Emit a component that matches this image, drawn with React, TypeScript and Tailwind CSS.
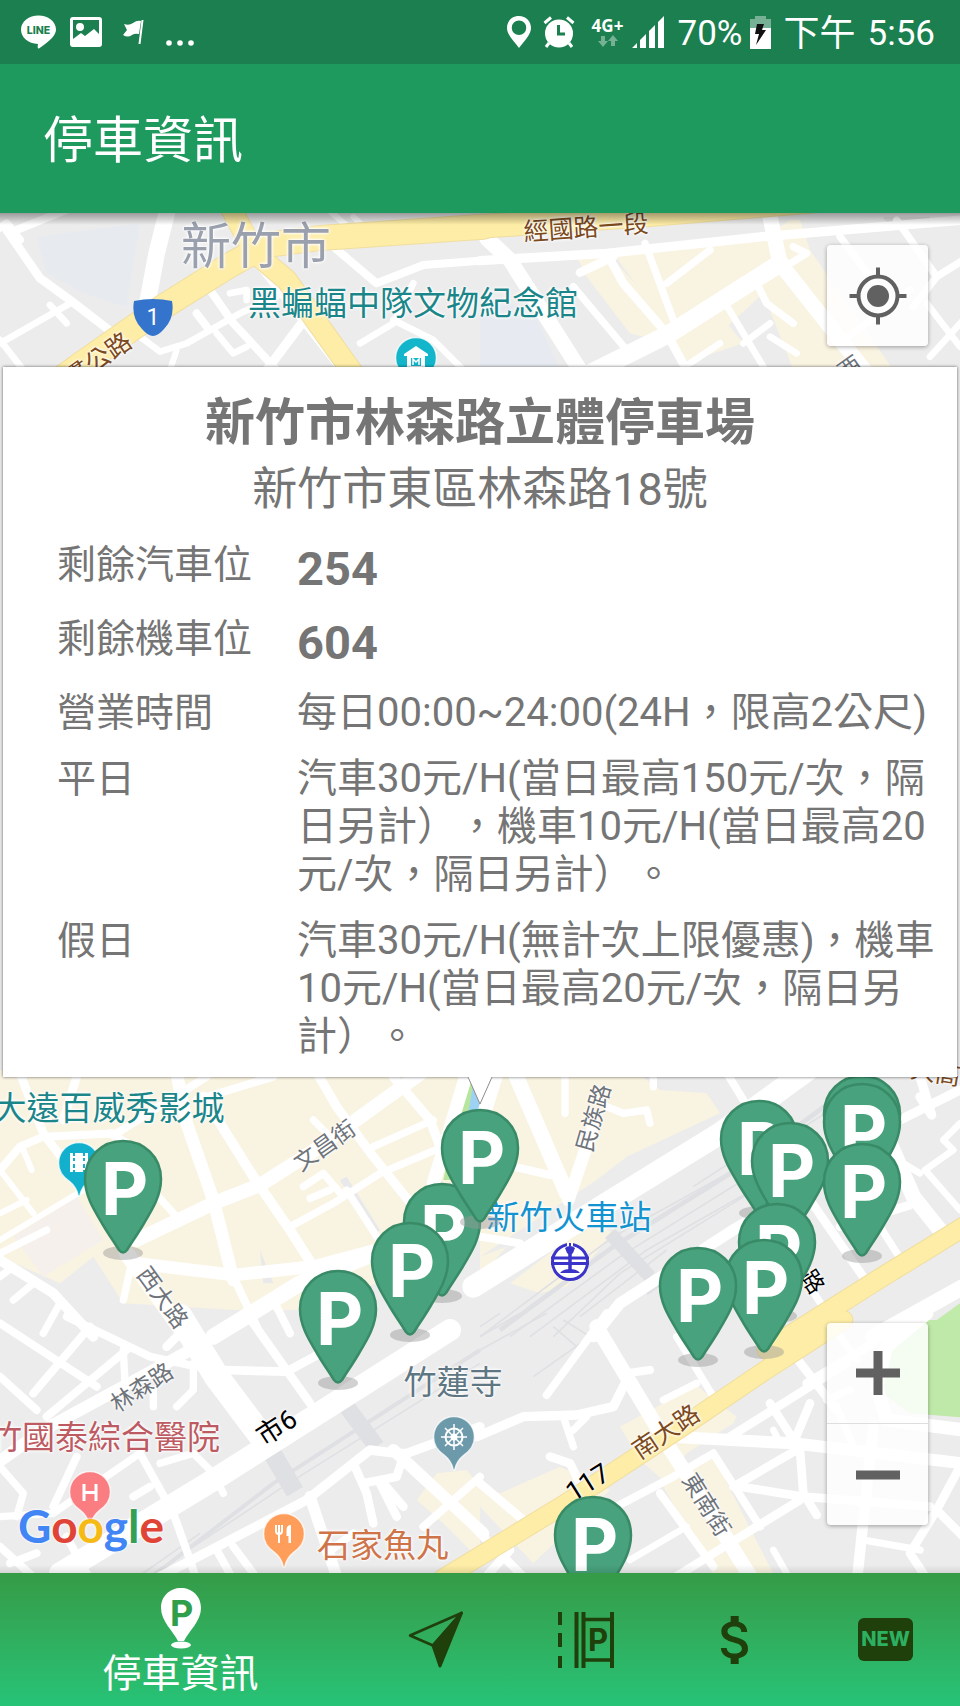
import React from "react";
import { MdAttachMoney } from "react-icons/md";

const MAP_W = 960;
const MAP_H = 1360;
const MAP_TOP = 213;

/* ---------- Map geometry: tiles are drawn at three units per pixel ---------- */

type Shape = [string | number, string];

interface Tile {
  x: number;
  y: number;
  areas: Shape[];
  rails: Shape[];
  roads: Shape[];
  majors: Shape[];
}

const BEIGE = "#f9f3e1";

const tiles: Tile[] = [
  {
    x: 0,
    y: 210,
    areas: [["#e7eaef", "M110 80 L420 40 L380 290 L250 250 L140 190Z"]],
    rails: [],
    roads: [
      [50, "M505 -10 L470 130 L440 290"],
      [26, "M20 60 L120 205 L210 270 L340 370"],
      [24, "M-10 60 L20 40 L60 90 M50 60 L210 -5"],
      [20, "M0 400 L210 280 M150 285 L200 340 M0 390 L70 480"],
      [24, "M1440 152 L1270 165 L1130 220 L1000 110"],
      [20, "M420 380 L480 425 L560 400 L720 310 L830 260"],
      [24, "M630 240 L700 340 L830 480 M590 310 L620 350"],
      [20, "M650 370 L700 430 L740 410 M690 250 L740 240 L740 270"],
      [28, "M905 340 L800 480"],
      [20, "M1080 400 L1180 340 L1240 220 M1180 330 L1300 390 L1390 480"],
      [18, "M510 480 L530 420 M1060 20 L1110 70 M980 -5 L1090 90"],
      [46, "M780 150 L1040 480"],
    ],
    majors: [
      [66, "M690 -10 L765 130 L860 210 L1060 490"],
      [78, "M130 545 L240 465 L490 290 L690 165 L800 105 L950 85 L1450 50"],
    ],
  },
  {
    x: 480,
    y: 210,
    areas: [
      [BEIGE, "M290 140 L850 85 L930 30 L960 30 L990 120 L1240 480 L940 480 L850 250 L610 470 L560 400 L450 370 L320 200Z"],
      ["#e7ebf1", "M0 260 L160 300 L240 480 L0 480Z"],
      ["#ececec", "M320 60 L500 60 L560 200 L780 400 L950 480 L700 480Z"],
      [BEIGE, "M400 130 L700 110 L860 150 L560 350Z M340 180 L530 370 L450 370Z M580 390 L700 290 L790 400 L640 450Z M870 200 L960 130 L1240 480 L1020 480Z"],
      ["#dddddd", "M1210 20 A70 30 0 0 0 1350 20Z"],
    ],
    rails: [],
    roads: [
      [28, "M0 152 L380 130 L850 80 L1450 30"],
      [46, "M20 85 L90 150 L300 480"],
      [26, "M300 188 L400 140 M380 130 L430 220 L560 370 L620 480"],
      [22, "M495 100 L580 330 M560 220 L690 120 M280 230 L440 420"],
      [54, "M330 490 L570 370 L900 160"],
      [46, "M870 20 L900 160 L1160 490"],
      [20, "M730 270 L850 470 M790 400 L870 340 M630 460 L720 400 M870 380 L950 430"],
      [22, "M830 220 L860 280 L940 340 M940 110 L980 130 L900 180"],
      [22, "M1080 80 L1200 240 M1250 30 L1370 200 L1450 150 M1370 200 L1300 290"],
      [20, "M1340 280 L1440 410 M1350 440 L1450 330 M1080 400 L1290 240"],
    ],
    majors: [[74, "M-10 50 L500 15 L1100 -35"]],
  },
  {
    x: 0,
    y: 1070,
    areas: [
      [BEIGE, "M0 0 L1440 0 L1440 500 L950 720 L700 720 L370 700 L280 560 L180 640 L0 560Z"],
      ["#f6f0ec", "M40 500 L230 380 L310 510 L130 620Z"],
      ["#e9e9ec", "M1040 320 L1140 480 L1120 500 L1020 330Z M780 540 L820 640 L790 640Z"],
      ["#b7e59d", "M1400 0 L1440 0 L1440 60 L1350 330 L1330 330Z"],
      ["#9ed2f2", "M1425 10 L1450 10 L1450 330 L1370 330Z"],
    ],
    rails: [],
    roads: [
      [42, "M410 510 L640 400 L780 345 L930 250 L1290 -10"],
      [38, "M530 10 L560 160 L640 390 L700 630"],
      [30, "M610 80 L760 320 L870 480 L940 590"],
      [28, "M940 -10 L1010 110 L1120 260 L1240 410"],
      [28, "M1180 20 L1290 150 L1320 230"],
      [38, "M410 580 L700 615 L940 590 L1130 540 L1260 520"],
      [48, "M1100 560 L900 640 L640 800"],
      [48, "M380 550 L560 800"],
      [22, "M870 470 L1000 400 L1140 310 L1330 230 M1120 230 L1300 150 M1040 360 L1130 500"],
      [22, "M910 350 L970 310 L1030 380 M930 385 L990 360 M940 150 L1000 210"],
      [24, "M0 300 L60 230 L130 200 L350 190 L620 20 M330 190 L400 230"],
      [26, "M60 10 L130 190 L250 350 M190 150 L230 20"],
      [18, "M0 300 L100 430 M70 240 L95 300 M0 430 L80 390 M0 510 L250 360"],
      [22, "M430 330 L530 440 M0 550 L140 480"],
      [30, "M0 570 L160 670 L280 800"],
      [22, "M100 640 L40 690 M370 690 L390 600 M130 790 L180 700 M0 620 L40 590"],
      [40, "M1300 340 L1400 10"],
      [24, "M700 620 L780 790 M820 690 L870 790 M820 20 L590 90"],
    ],
    majors: [],
  },
  {
    x: 480,
    y: 1070,
    areas: [
      [BEIGE, "M0 0 L460 0 L540 60 L680 70 L720 130 L440 260 L350 330 L0 560Z"],
      [BEIGE, "M90 640 L340 450 L400 490 L260 650 L180 670Z"],
      [BEIGE, "M0 560 L80 530 L0 620Z"],
      ["#9ed2f2", "M-10 10 L40 10 L-10 110Z"],
      ["#c0ebab", "M1440 700 L1440 800 L1300 800Z"],
    ],
    rails: [
      [14, "M60 780 L400 530 L800 280 L1060 90"],
      [5, "M0 800 L400 500 L780 290 L1180 40 M90 800 L420 560 L790 330 M150 800 L500 540 L800 370 M220 800 L420 610 L840 350 M640 350 L900 180 M300 740 L560 540"],
      [40, "M390 490 L510 620"],
      [12, "M500 670 L820 450 L960 380"],
    ],
    roads: [
      [66, "M-20 650 L380 400 L720 190 L900 60 L1010 -20"],
      [46, "M105 10 L260 370"],
      [38, "M340 170 L265 390"],
      [42, "M50 10 L0 170"],
      [22, "M255 0 L255 130 M380 110 L430 130 L500 120 L510 160 M520 0 L520 50"],
      [24, "M100 290 L210 315 M0 500 L120 520 L150 560"],
      [24, "M735 0 L790 90"],
      [34, "M340 800 L420 700 L760 480 L900 400"],
      [26, "M990 390 L1170 650 M1080 470 L1290 405"],
      [46, "M1230 220 L1300 380 L1380 480"],
      [28, "M1240 160 L1440 60 M1320 80 L1355 135 L1320 20"],
      [20, "M1440 160 L1390 210 L1420 240 L1335 300 L1440 420 M1320 310 L1270 280"],
      [22, "M1200 470 L1270 580 M990 650 L1060 760"],
      [48, "M1180 800 L1450 650"],
    ],
    majors: [[62, "M860 840 L1200 625 L1460 465"]],
  },
  {
    x: 0,
    y: 1320,
    areas: [[BEIGE, "M1310 460 L1400 450 L1440 500 L1440 720 L1340 620 L1250 540Z"]],
    rails: [
      [12, "M430 790 L820 490 L1440 90"],
      [5, "M460 760 L850 500 L1440 130 M400 780 L600 640"],
      [56, "M805 380 L885 515"],
      [50, "M1010 220 L1130 380"],
    ],
    roads: [
      [66, "M180 760 L640 480 L1350 30"],
      [28, "M460 780 L920 540 L1110 390 L1190 400 L1220 400 L1440 320"],
      [76, "M540 -10 L650 170 L800 370"],
      [24, "M0 10 L290 200 M200 -10 L450 110 L590 140 M270 20 L100 220"],
      [24, "M380 90 L140 290 M0 170 L110 270"],
      [36, "M-10 430 L130 330 L590 80"],
      [22, "M370 90 L375 190 M460 210 L460 260 M580 130 L580 210 L530 260"],
      [26, "M670 150 L860 155 L980 90 M760 10 L930 250 M500 80 L560 20 M640 60 L760 -10"],
      [24, "M420 400 L520 580 L570 720 L590 780 M400 530 L450 500 M230 410 L160 560"],
      [22, "M480 430 L580 400 L640 460 L670 520 M0 590 L160 580 L420 400 M0 440 L70 520 L50 590"],
      [24, "M0 680 L110 780 M30 730 L110 700 M200 650 L260 760"],
      [34, "M930 530 L1010 770"],
      [26, "M1060 430 L1100 520 L1120 610 M1150 490 L1210 560 M1090 490 L1190 470 L1210 410 M1140 490 L1190 590"],
      [36, "M1180 390 L1450 640"],
      [24, "M1440 470 L1270 620 M1060 640 L980 700 M650 690 L700 780 M700 680 L760 760"],
    ],
    majors: [],
  },
  {
    x: 480,
    y: 1320,
    areas: [
      [BEIGE, "M420 320 L650 195 L690 230 L770 290 L760 310 L620 400 L560 490 L480 420Z"],
      [BEIGE, "M60 520 L240 440 L390 510 L160 730 L0 560 L0 500Z"],
      [BEIGE, "M550 500 L700 410 L900 800 L720 800Z"],
      ["#bfe9a9", "M1340 0 L1440 0 L1440 292 L1290 280 L1220 230 L1200 180 L1230 90Z"],
    ],
    rails: [[5, "M0 20 L60 -20 M0 50 L120 -20 M0 90 L200 -20 M160 170 L330 50 M220 20 L290 80 M250 0 L330 50"]],
    roads: [
      [44, "M350 20 L440 170 L560 370 L630 480 L830 800"],
      [24, "M200 225 L380 -20 M440 160 L510 150"],
      [28, "M440 180 L400 260 L290 285 L130 290 L-10 350"],
      [22, "M250 290 L280 380 M550 240 L650 190 M590 50 L700 230 M320 290 L280 330"],
      [36, "M600 352 L940 370 L1450 430"],
      [26, "M750 350 L1100 130 M870 250 L960 390 L970 520 L1010 585 M990 250 L940 370"],
      [26, "M760 500 L950 390 M780 500 L970 530 L1350 560 M960 540 L700 700 L540 800"],
      [24, "M700 400 L840 620 M390 570 L580 470 L700 400 M540 520 L700 740"],
      [20, "M450 720 L620 620 M880 330 L900 370 M880 690 L920 760"],
      [26, "M900 50 L1070 270 M980 190 L1180 70"],
      [26, "M1440 440 L1370 570 L1450 650 M1370 570 L1290 700 L1350 790"],
      [32, "M1180 320 L1130 790"],
      [22, "M1150 660 L1320 690 M1060 20 L1130 120 M1070 260 L1120 380 M1040 240 L1110 210"],
      [40, "M1450 330 L1220 300 L1190 200 L1220 80 L1340 -20"],
      [26, "M0 490 L130 600 M-10 630 L150 790 M210 410 L270 430 L310 510 M0 790 L90 690"],
    ],
    majors: [[60, "M-110 775 L0 708 L250 555 L600 325 L850 155 L1090 0"]],
  },
];

function MapTiles() {
  const place = (t: Tile) => `translate(${t.x} ${t.y}) scale(0.33333)`;
  return (
    <svg
      className="absolute inset-0 size-full bg-[#ececec]"
      viewBox={`0 ${MAP_TOP} ${MAP_W} ${MAP_H}`}
      preserveAspectRatio="none"
      fill="none"
      strokeLinecap="round"
      strokeLinejoin="round"
      aria-hidden="true"
    >
      {tiles.map((t, i) => (
        <g key={i} transform={place(t)}>
          {t.areas.map(([c, d], k) => <path key={k} d={d} fill={String(c)} />)}
          {t.rails.map(([w, d], k) => <path key={k} d={d} stroke="#dfe0e3" strokeWidth={w} strokeLinecap="butt" />)}
        </g>
      ))}
      {tiles.map((t, i) => (
        <g key={i} transform={place(t)} stroke="#ffffff">
          {t.roads.map(([w, d], k) => <path key={k} d={d} strokeWidth={w} />)}
        </g>
      ))}
      {tiles.map((t, i) => (
        <g key={i} transform={place(t)}>
          {t.majors.map(([w, d], k) => <path key={k} d={d} stroke="#f0dea0" strokeWidth={w} />)}
        </g>
      ))}
      {tiles.map((t, i) => (
        <g key={i} transform={place(t)}>
          {t.majors.map(([w, d], k) => <path key={k} d={d} stroke="#feeda6" strokeWidth={Number(w) - 6} />)}
        </g>
      ))}
    </svg>
  );
}

const at = (x: number, y: number, turn = 0) => ({
  left: `${(x / MAP_W) * 100}%`,
  top: `${((y - MAP_TOP) / MAP_H) * 100}%`,
  rotate: `${turn}deg`,
});

/* ---------- Map labels ---------- */

const kinds = {
  city: "text-[50px] text-[#9aa0ad]",
  culture: "text-[33px] text-[#1b868a]",
  station: "text-[33px] text-[#1493d1]",
  health: "text-[33px] text-[#bd5a62]",
  temple: "text-[33px] text-[#5f7683]",
  food: "text-[33px] text-[#cf7449]",
  street: "text-[23px] text-[#6f747b]",
  avenue: "text-[25px] text-[#7c4a1c]",
  route: "text-[27px] text-black",
  minor: "text-[23px] text-black",
};

const labels: { text: string; x: number; y: number; turn?: number; kind: keyof typeof kinds }[] = [
  { text: "新竹市", x: 256, y: 247, kind: "city" },
  { text: "黑蝙蝠中隊文物紀念館", x: 413, y: 303, kind: "culture" },
  { text: "經國路一段", x: 586, y: 228, turn: -4, kind: "avenue" },
  { text: "縱貫公路", x: 88, y: 367, turn: -35, kind: "avenue" },
  { text: "西", x: 850, y: 368, turn: -35, kind: "street" },
  { text: "大高架", x: 948, y: 1075, turn: 9, kind: "avenue" },
  { text: "大遠百威秀影城", x: 109, y: 1108, kind: "culture" },
  { text: "文昌街", x: 325, y: 1146, turn: -35, kind: "street" },
  { text: "民族路", x: 594, y: 1118, turn: -74, kind: "street" },
  { text: "新竹火車站", x: 569, y: 1217, kind: "station" },
  { text: "路", x: 812, y: 1282, turn: 57, kind: "minor" },
  { text: "西大路", x: 162, y: 1298, turn: 54, kind: "street" },
  { text: "林森路", x: 142, y: 1388, turn: -33, kind: "street" },
  { text: "市6", x: 277, y: 1428, turn: -33, kind: "route" },
  { text: "竹蓮寺", x: 453, y: 1382, kind: "temple" },
  { text: "新竹國泰綜合醫院", x: 88, y: 1437, kind: "health" },
  { text: "南大路", x: 666, y: 1432, turn: -34, kind: "avenue" },
  { text: "117", x: 588, y: 1483, turn: -32, kind: "route" },
  { text: "東南街", x: 706, y: 1505, turn: 58, kind: "street" },
  { text: "石家魚丸", x: 383, y: 1545, kind: "food" },
];

/* ---------- Points of interest ---------- */

function PoiPin({ x, y, color, children }: { x: number; y: number; color: string; children: React.ReactNode }) {
  return (
    <svg
      className="absolute h-[58px] w-11 -translate-x-1/2 -translate-y-[22px]"
      style={at(x, y)}
      viewBox="0 0 44 58"
      aria-hidden="true"
    >
      <path
        d="M22 1.500C10.500 1.500 1.500 10.500 1.500 22C1.500 31 6 36 12 40C17 44 20 49 21 54Q22 57 23 54C24 49 27 44 32 40C38 36 42.500 31 42.500 22C42.500 10.500 33.500 1.500 22 1.500Z"
        fill={color}
        stroke="#ffffff"
        strokeOpacity="0.800"
        strokeWidth="1.500"
      />
      {children}
    </svg>
  );
}

function Pois() {
  return (
    <>
      <svg className="absolute h-10 w-[42px] -translate-x-1/2 -translate-y-1/2" style={at(153, 318)} viewBox="0 0 42 40" aria-hidden="true">
        <path d="M2 3Q21 -1 40 3Q43 20 32 31Q26 38 21 38Q16 38 10 31Q-1 20 2 3Z" fill="#3574cd" />
        <text x="21" y="27" textAnchor="middle" fontSize="23" fill="#ffffff" fontFamily="Roboto, sans-serif">1</text>
      </svg>
      <PoiPin x={416} y={358} color="#12b5c9">
        <path d="M22 10L34 18V20H10V18Z" fill="#fff" />
        <path d="M13 20H31V31H13Z" fill="#fff" />
        <path d="M17 22H27V30H17Z" fill="#12b5c9" />
        <path d="M19 29V23L22 26L25 23V29" fill="none" stroke="#fff" strokeWidth="1.500" />
      </PoiPin>
      <PoiPin x={79} y={1163} color="#12b0cc">
        <path d="M13 12H16V31H13ZM28 12H31V31H28ZM18 12H26V31H18ZM16 15H28V17H16ZM16 20H28V23H16ZM16 27H28V29H16Z" fill="#fff" />
      </PoiPin>
      <svg className="absolute size-10 -translate-x-1/2 -translate-y-1/2" style={at(570, 1262)} viewBox="0 0 40 40" aria-hidden="true">
        <circle cx="20" cy="20" r="17.500" fill="#ffffff" stroke="#3a34c9" strokeWidth="3" />
        <path d="M17 0H19V5H17ZM21 0H23V5H21Z" fill="#fff" />
        <path d="M1 16H39M1 21.500H39" stroke="#3a34c9" strokeWidth="3" />
        <path d="M20 10V30" stroke="#3a34c9" strokeWidth="3.500" />
        <path d="M15 6Q20 2 25 6L23 11Q20 14 17 11ZM10 31Q13 27 20 27Q27 27 30 31Z" fill="#3a34c9" />
      </svg>
      <PoiPin x={454} y={1437} color="#6d9aab">
        <g fill="none" stroke="#fff" strokeWidth="2">
          <circle cx="22" cy="22" r="8.500" />
          <circle cx="22" cy="22" r="2.500" />
          <path d="M22 9V35M9 22H35M13 13L31 31M31 13L13 31" strokeWidth="1.500" />
        </g>
      </PoiPin>
      <PoiPin x={90} y={1492} color="#f97d81">
        <path d="M16 14V31M28 14V31M16 22.500H28" stroke="#fff" strokeWidth="3" fill="none" />
      </PoiPin>
      <PoiPin x={284} y={1534} color="#ff9d5b">
        <path d="M14 13V19Q14 22 17 22V31M20 13V19Q20 22 17 22M17 13V22" stroke="#fff" strokeWidth="2" fill="none" />
        <path d="M29 13V31H26.500V24H24.500V18Q24.500 13 29 13Z" fill="#fff" />
      </PoiPin>
    </>
  );
}

/* ---------- Parking markers: position of each tip ---------- */

const markers: [number, number][] = [
  [123, 1253],
  [442, 1296],
  [480, 1222],
  [410, 1335],
  [338, 1383],
  [759, 1213],
  [790, 1235],
  [862, 1188],
  [862, 1196],
  [862, 1256],
  [777, 1316],
  [764, 1352],
  [698, 1360],
  [593, 1609],
];

function ParkingMarker({ x, y }: { x: number; y: number }) {
  return (
    <button
      type="button"
      aria-label="停車場"
      className="absolute h-[122px] w-20 -translate-x-1/2 -translate-y-[114px]"
      style={at(x, y)}
    >
      <svg viewBox="0 0 80 122" className="block size-full">
        <ellipse cx="40" cy="114" rx="20" ry="7" fill="#9a9a9a" fillOpacity="0.450" />
        <path
          d="M40 2C61 2 78 18 78 40C78 57 69 71 60 86C54 96 49 103 44 111Q40 116 36 111C31 103 26 96 20 86C11 71 2 57 2 40C2 18 19 2 40 2Z"
          fill="#48a27d"
          stroke="#398a67"
          strokeWidth="2.500"
        />
        <text x="18" y="76" fontSize="73" fontWeight="700" fill="#ffffff" fontFamily="Inter, sans-serif">P</text>
      </svg>
    </button>
  );
}

/* ---------- Status bar ---------- */

function StatusBar() {
  return (
    <div className="flex items-center justify-between bg-[#1b7f4f] pr-[25px] pl-[21px] leading-[60px] text-white">
      <div className="flex items-center gap-[14px]">
        <svg viewBox="0 0 35 34" className="h-[34px] w-[35px]" aria-label="LINE">
          <path d="M17.500 0.500C27 0.500 35 6.500 35 14.500C35 20 30 25 18 33.500Q16 34 17 29C7 28.500 0 22.500 0 14.500C0 6.500 8 0.500 17.500 0.500Z" fill="#fff" />
          <text x="17.500" y="19" textAnchor="middle" fontSize="10.500" fontWeight="800" fill="#1b7f4f" fontFamily="Inter, sans-serif">LINE</text>
        </svg>
        <svg viewBox="0 0 32 30" className="h-[30px] w-8" aria-hidden="true">
          <path fillRule="evenodd" fill="#fff" d="M3 0H29Q32 0 32 3V27Q32 30 29 30H3Q0 30 0 27V3Q0 0 3 0ZM3 3V22L11 16L15 19L24 12L29 17V3ZM10 6A4 4 0 1 1 10 14A4 4 0 1 1 10 6Z" />
        </svg>
        <svg viewBox="0 0 22 26" className="ml-[7px] h-[26px] w-[22px]" aria-hidden="true">
          <path d="M1 5Q6 7 10 4Q14 1 18 2L16 15Q12 14 9 16Q5 19 0 16L4 11Z" fill="#fff" />
          <path d="M19.500 1L16.500 25" stroke="#fff" strokeWidth="2" />
        </svg>
        <svg viewBox="0 0 28 30" className="ml-[7px] h-[30px] w-7" fill="#fff" aria-hidden="true">
          <circle cx="3" cy="26" r="2.800" />
          <circle cx="14" cy="26" r="2.800" />
          <circle cx="25" cy="26" r="2.800" />
        </svg>
      </div>
      <div className="flex items-center">
        <svg viewBox="0 0 24 32" className="h-8 w-6" aria-hidden="true">
          <path fillRule="evenodd" fill="#fff" d="M12 0C19 0 24 5 24 12C24 19 17 25 12 32C7 25 0 19 0 12C0 5 5 0 12 0ZM12 4.500A7 7 0 1 0 12 19A7 7 0 1 0 12 4.500Z" />
        </svg>
        <svg viewBox="0 0 32 32" className="ml-3 size-8" aria-hidden="true">
          <circle cx="16" cy="17.500" r="14" fill="#fff" />
          <path d="M1.500 7L8 1.500M30.500 7L24 1.500M6 27L3 31M26 27L29 31" stroke="#fff" strokeWidth="3" fill="none" />
          <path d="M15.500 9V18H22" stroke="#1b7f4f" strokeWidth="3" fill="none" />
        </svg>
        <div className="ml-4 flex w-[34px] flex-col items-center">
          <span className="font-['Open_Sans'] text-[17px] leading-[18px] font-bold">4G+</span>
          <svg viewBox="0 0 20 12" className="h-3 w-5" fill="#76b195" aria-hidden="true">
            <path d="M3 1H7V6H10L5 12L0 6H3ZM13 11H17V6H20L15 0L10 6H13Z" />
          </svg>
        </div>
        <svg viewBox="0 0 32 32" className="ml-[7px] size-8" fill="#fff" aria-hidden="true">
          <path d="M0 32L5 27V32ZM8 24L14 18V32H8ZM17 15L23 9V32H17ZM26 6L32 0V32H26Z" />
        </svg>
        <span className="ml-[14px] pt-1 text-[35px]">70%</span>
        <svg viewBox="0 0 21 33" className="ml-2 h-[33px] w-[21px]" aria-hidden="true">
          <path d="M5 0H16V3H21V12H0V3H5Z" fill="#76b195" />
          <path d="M0 12H21V33H0Z" fill="#fff" />
          <path d="M7 8H14L12 14H16L6 29L9 18H5Z" fill="#111" />
        </svg>
        <span className="ml-3 flex gap-3 pt-1 text-[35px]">
          <span className="text-[36px]">下午</span>
          <span>5:56</span>
        </span>
      </div>
    </div>
  );
}

/* ---------- Info window ---------- */

const rows = [
  { label: "剩餘汽車位", value: "254", count: true },
  { label: "剩餘機車位", value: "604", count: true },
  { label: "營業時間", value: "每日00:00~24:00(24H，限高2公尺)" },
  { label: "平日", value: "汽車30元/H(當日最高150元/次，隔日另計），機車10元/H(當日最高20元/次，隔日另計）。" },
  { label: "假日", value: "汽車30元/H(無計次上限優惠)，機車10元/H(當日最高20元/次，隔日另計）。" },
];

function InfoWindow() {
  return (
    <article className="relative mx-[3px] bg-white pt-[26px] pb-4 text-[#757575] shadow-[0_0_3px_rgba(0,0,0,0.6)]">
      <h2 className="text-center text-[50px] leading-[60px] font-bold">新竹市林森路立體停車場</h2>
      <p className="mt-[10px] text-center text-[45px] leading-[54px]">新竹市東區林森路18號</p>
      <dl className="mt-6 flex flex-col gap-[18px] pr-4 pl-[54px] text-[40px] leading-[48px]">
        {rows.map((r) => (
          <div key={r.label} className="grid grid-cols-[240px_1fr]">
            <dt className="text-[39px]">{r.label}</dt>
            <dd className={r.count ? "text-[47px] leading-[56px] font-bold" : ""}>{r.value}</dd>
          </div>
        ))}
      </dl>
      <svg viewBox="0 0 28 30" className="absolute top-full left-1/2 h-[30px] w-7 -translate-x-1/2" aria-hidden="true">
        <path d="M2 0L14 27L26 0" fill="#fff" stroke="#8b8b8b" strokeWidth="1" />
      </svg>
    </article>
  );
}

/* ---------- Map ---------- */

const control =
  "flex h-[101px] w-full items-center justify-center bg-white/85 text-[#616161]";

function ParkingMap() {
  return (
    <main className="relative flex-1 overflow-hidden pt-[154px]">
      <MapTiles />
      {labels.map((l) => (
        <span
          key={l.text + l.x}
          className={`absolute -translate-x-1/2 -translate-y-1/2 leading-none whitespace-nowrap [text-shadow:0_0_2px_#fff,0_0_3px_#fff,0_0_4px_#fff] ${kinds[l.kind]}`}
          style={at(l.x, l.y, l.turn)}
        >
          {l.text}
        </span>
      ))}
      <Pois />
      {markers.map(([x, y]) => <ParkingMarker key={`${x}-${y}`} x={x} y={y} />)}
      <div className="absolute bottom-5 left-[18px] font-[Lato] text-[46px] leading-[54px] font-bold [text-shadow:0_0_2px_#fff,0_0_3px_#fff]">
        <span className="text-[#4285f4]">G</span>
        <span className="text-[#e04436]">o</span>
        <span className="text-[#f5ba15]">o</span>
        <span className="text-[#4285f4]">g</span>
        <span className="text-[#34a055]">l</span>
        <span className="text-[#e04436]">e</span>
      </div>
      <div className="absolute top-8 right-8 w-[101px] overflow-hidden rounded-[4px] shadow-[0_1px_4px_rgba(0,0,0,0.35)]">
        <button type="button" aria-label="我的位置" className={control}>
          <svg viewBox="0 0 58 58" className="size-[58px]" fill="none" stroke="currentColor" strokeWidth="4" aria-hidden="true">
            <circle cx="29" cy="29" r="19.500" />
            <circle cx="29" cy="29" r="11" fill="currentColor" stroke="none" />
            <path d="M29 0.500V9M29 49V57.500M0.500 29H9M49 29H57.500" />
          </svg>
        </button>
      </div>
      <div className="absolute right-8 bottom-12 w-[101px] divide-y divide-[#dedede] overflow-hidden rounded-[4px] shadow-[0_1px_4px_rgba(0,0,0,0.35)]">
        <button type="button" aria-label="放大" className={control}>
          <svg viewBox="0 0 44 44" className="size-11" stroke="currentColor" strokeWidth="9" aria-hidden="true">
            <path d="M0 22H44M22 0V44" />
          </svg>
        </button>
        <button type="button" aria-label="縮小" className={control}>
          <svg viewBox="0 0 44 44" className="size-11" stroke="currentColor" strokeWidth="9" aria-hidden="true">
            <path d="M0 22H44" />
          </svg>
        </button>
      </div>
      <InfoWindow />
      <div className="h-[494px]" />
      <div className="absolute inset-x-0 top-0 h-3 bg-linear-to-b from-black/35 to-transparent" />
      <div className="absolute inset-x-0 bottom-0 h-2 bg-linear-to-t from-black/10 to-transparent" />
    </main>
  );
}

/* ---------- Bottom navigation ---------- */

function BottomNav() {
  return (
    <nav className="grid grid-cols-[361fr_150fr_150fr_150fr_149fr] bg-linear-to-b from-[#359b46] to-[#26c377] text-[#1f3f0b]">
      <button type="button" className="flex flex-col items-center pt-[14px] pb-2 text-white">
        <svg viewBox="0 0 40 62" className="h-[62px] w-10" aria-hidden="true">
          <path d="M20 1C31 1 40 9 40 21C40 34 28 44 23 54H17C12 44 0 34 0 21C0 9 9 1 20 1Z" fill="#fff" />
          <ellipse cx="20" cy="58" rx="10" ry="3.500" fill="#fff" />
          <text x="9" y="39" fontSize="36" fontWeight="700" fill="#2f9f4b" fontFamily="Inter, sans-serif">P</text>
        </svg>
        <span className="pt-px text-[39px] leading-[48px]">停車資訊</span>
      </button>
      <button type="button" aria-label="導航" className="flex items-center justify-center">
        <svg viewBox="0 0 56 58" className="h-[58px] w-14" aria-hidden="true">
          <path d="M2 24.500L53.500 2L25 34.500Z" fill="none" stroke="currentColor" strokeWidth="2.500" strokeLinejoin="round" />
          <path d="M53.500 2L25 34.500L32 55Z" fill="currentColor" stroke="currentColor" strokeWidth="3" strokeLinejoin="round" />
        </svg>
      </button>
      <button type="button" aria-label="路邊停車" className="flex items-center justify-center">
        <svg viewBox="0 0 56 58" className="h-[58px] w-14" aria-hidden="true">
          <path d="M2 1V14M2 22V36M2 45V57M18.500 1V57M25.500 1V57M54 1V57" stroke="currentColor" strokeWidth="4" />
          <path d="M27 8.500H53M27 49H53" stroke="currentColor" strokeWidth="3.500" />
          <text x="30" y="40" fontSize="31" fontWeight="700" fill="currentColor" fontFamily="Inter, sans-serif">P</text>
        </svg>
      </button>
      <button type="button" aria-label="費用" className="flex items-center justify-center">
        <MdAttachMoney className="size-16" aria-hidden="true" />
      </button>
      <button type="button" aria-label="最新消息" className="flex items-center justify-center">
        <span className="rounded-[6px] bg-[#1f3f0b] px-[3px] font-[Inter] text-[20px] leading-[43px] font-extrabold text-[#2db062]">NEW</span>
      </button>
    </nav>
  );
}

export default function App() {
  return (
    <div
      lang="zh-TW"
      className="flex min-h-screen flex-col font-[Roboto,'Noto_Sans_CJK_TC',sans-serif] [text-spacing-trim:space-all]"
    >
      <header className="bg-[#1e9a5e] text-white">
        <StatusBar />
        <h1 className="px-[43px] pt-[52px] pb-[46px] text-[50px] leading-[51px]">停車資訊</h1>
      </header>
      <ParkingMap />
      <BottomNav />
    </div>
  );
}
